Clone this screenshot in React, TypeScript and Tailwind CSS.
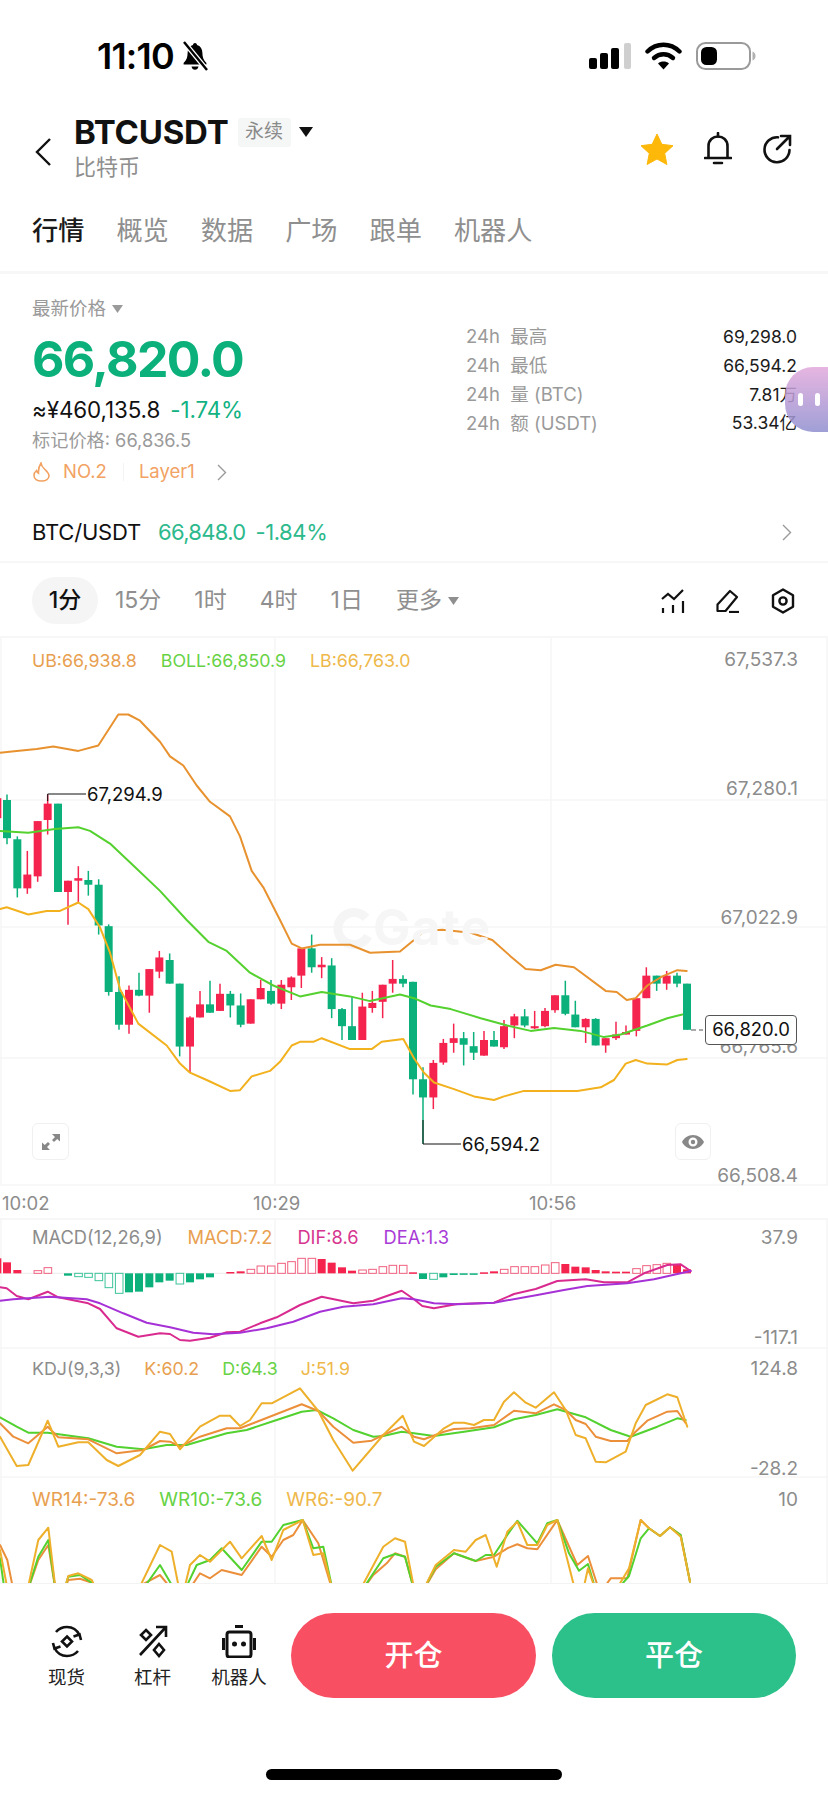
import React from "react";

type Candle = [number, number, number, number, number, "r" | "g"];
type Pt = [number, number];

const RED = "#f5244f";
const GREEN = "#0bb07b";

// x in 3x crop px, y in 2.75x crop px, relative to (0,640)
const candles: Candle[] = [
  [-8, 430, 500, 435, 490, "r"],
  [21, 425, 562, 440, 545, "g"],
  [52, 540, 708, 548, 683, "g"],
  [82, 580, 698, 645, 683, "r"],
  [113, 498, 665, 498, 650, "r"],
  [143, 425, 535, 450, 495, "r"],
  [174, 450, 693, 450, 693, "g"],
  [204, 662, 783, 662, 693, "r"],
  [235, 622, 722, 655, 662, "r"],
  [265, 635, 703, 660, 673, "g"],
  [296, 658, 810, 673, 785, "g"],
  [326, 782, 978, 787, 968, "g"],
  [357, 925, 1072, 968, 1058, "g"],
  [387, 950, 1083, 962, 1058, "r"],
  [417, 915, 980, 962, 978, "g"],
  [448, 905, 1025, 905, 978, "r"],
  [478, 855, 930, 873, 912, "r"],
  [509, 862, 945, 880, 945, "g"],
  [539, 945, 1145, 945, 1118, "g"],
  [570, 1035, 1190, 1038, 1118, "r"],
  [600, 965, 1038, 1002, 1038, "r"],
  [630, 937, 1025, 1002, 1025, "g"],
  [660, 945, 1020, 973, 1020, "r"],
  [691, 965, 1038, 973, 1005, "g"],
  [722, 972, 1065, 1005, 1058, "g"],
  [752, 988, 1055, 988, 1055, "r"],
  [782, 935, 988, 957, 988, "r"],
  [813, 935, 1003, 965, 1000, "g"],
  [844, 935, 1015, 948, 1000, "r"],
  [874, 925, 990, 928, 955, "r"],
  [904, 848, 957, 848, 923, "r"],
  [935, 810, 915, 848, 900, "g"],
  [965, 872, 930, 893, 900, "r"],
  [995, 875, 1040, 895, 1015, "g"],
  [1026, 1012, 1100, 1015, 1062, "g"],
  [1056, 980, 1100, 1062, 1100, "g"],
  [1087, 970, 1100, 1008, 1100, "r"],
  [1117, 965, 1025, 998, 1012, "r"],
  [1148, 948, 1040, 948, 995, "r"],
  [1178, 880, 970, 932, 945, "r"],
  [1209, 922, 955, 932, 945, "g"],
  [1239, 940, 1250, 940, 1208, "g"],
  [1269, 1175, 1385, 1208, 1258, "g"],
  [1300, 1155, 1290, 1163, 1258, "r"],
  [1330, 1097, 1168, 1108, 1162, "r"],
  [1361, 1055, 1135, 1095, 1108, "r"],
  [1391, 1078, 1170, 1095, 1113, "g"],
  [1421, 1078, 1155, 1117, 1135, "g"],
  [1452, 1075, 1143, 1100, 1143, "r"],
  [1482, 1075, 1118, 1100, 1118, "g"],
  [1512, 1045, 1125, 1062, 1120, "r"],
  [1543, 1028, 1095, 1035, 1060, "r"],
  [1574, 1015, 1065, 1035, 1060, "g"],
  [1604, 1020, 1070, 1062, 1068, "r"],
  [1635, 1012, 1065, 1020, 1062, "r"],
  [1665, 977, 1025, 977, 1018, "r"],
  [1696, 937, 1032, 977, 1028, "g"],
  [1726, 992, 1065, 1030, 1065, "g"],
  [1757, 1040, 1108, 1042, 1065, "r"],
  [1787, 1040, 1115, 1042, 1115, "g"],
  [1817, 1095, 1135, 1095, 1115, "r"],
  [1848, 1050, 1100, 1085, 1095, "r"],
  [1878, 1060, 1085, 1078, 1085, "r"],
  [1909, 985, 1090, 985, 1075, "r"],
  [1939, 900, 985, 923, 985, "r"],
  [1970, 923, 965, 923, 945, "g"],
  [2000, 910, 962, 923, 945, "r"],
  [2031, 915, 955, 923, 945, "g"],
  [2061, 945, 1072, 945, 1072, "g"],
];

const ub: Pt[] = [[0,310],[50,305],[110,300],[160,293],[235,305],[295,290],[355,205],[385,205],[420,222],[480,280],[510,320],[550,345],[590,400],[630,445],[690,485],[720,540],[755,635],[790,680],[840,770],[875,835],[905,848],[960,838],[1050,838],[1110,860],[1200,857],[1242,825],[1272,800],[1327,797],[1412,805],[1477,825],[1532,870],[1577,905],[1622,908],[1667,893],[1722,900],[1817,965],[1850,968],[1880,990],[1907,985],[1942,950],[1987,925],[2032,908],[2060,910]];
const boll: Pt[] = [[0,525],[85,530],[165,520],[235,515],[270,525],[330,560],[400,620],[480,690],[560,770],[625,830],[680,855],[750,915],[820,950],[900,980],[965,968],[1050,980],[1110,993],[1200,975],[1242,985],[1292,1005],[1352,1015],[1442,1040],[1522,1060],[1592,1075],[1662,1067],[1742,1075],[1812,1092],[1862,1085],[1942,1060],[2002,1040],[2047,1030]];
const lb: Pt[] = [[0,740],[20,735],[85,755],[140,745],[180,745],[235,722],[265,740],[300,790],[330,860],[360,960],[415,1055],[500,1115],[540,1165],[570,1190],[620,1210],[690,1240],[720,1238],[755,1200],[810,1185],[840,1160],[875,1115],[900,1105],[940,1105],[965,1095],[1050,1125],[1115,1125],[1145,1105],[1210,1097],[1242,1150],[1272,1190],[1302,1217],[1362,1235],[1422,1255],[1482,1265],[1512,1255],[1572,1240],[1732,1240],[1802,1230],[1842,1210],[1877,1165],[1907,1155],[1942,1165],[2002,1167],[2032,1155],[2060,1152]];

// macd panel points: x in 3x crop px, y in 3x crop px, relative to (0,1210)
const dif: Pt[] = [[0,232],[20,235],[50,258],[85,268],[143,245],[175,262],[265,280],[300,297],[350,355],[415,380],[480,370],[510,372],[540,390],[570,392],[630,383],[680,367],[720,365],[780,340],[830,322],[900,285],[965,260],[1060,280],[1120,272],[1205,242],[1242,268],[1267,288],[1302,295],[1372,282],[1482,278],[1542,252],[1607,237],[1672,213],[1757,208],[1812,217],[1882,217],[1932,190],[2002,165],[2042,163],[2072,183]];
const dea: Pt[] = [[0,272],[40,268],[150,260],[260,268],[300,280],[370,310],[440,338],[510,352],[580,368],[640,373],[720,368],[800,355],[880,335],[960,305],[1030,290],[1120,283],[1205,265],[1242,268],[1302,280],[1372,283],[1482,278],[1612,255],[1692,240],[1762,228],[1882,220],[1962,208],[2072,183]];

const kD: Pt[] = [[0,622],[50,650],[85,668],[143,668],[265,685],[350,710],[430,718],[500,705],[560,705],[680,670],[740,660],[830,630],[905,605],[950,600],[1000,625],[1060,660],[1120,680],[1150,678],[1205,665],[1242,670],[1302,678],[1392,665],[1482,652],[1542,628],[1607,615],[1672,598],[1757,622],[1832,660],[1892,680],[1972,650],[2032,625],[2057,630]];
const kK: Pt[] = [[0,640],[40,680],[85,700],[143,650],[175,682],[265,688],[350,730],[430,720],[480,693],[510,695],[540,710],[600,680],[680,655],[720,655],[790,628],[905,583],[955,603],[1000,650],[1060,698],[1115,692],[1150,675],[1205,650],[1242,680],[1272,688],[1332,665],[1362,657],[1412,655],[1482,645],[1542,602],[1607,610],[1662,583],[1697,600],[1727,630],[1757,642],[1787,680],[1832,693],[1882,693],[1902,670],[1942,632],[2002,605],[2032,603],[2057,640]];
const kJ: Pt[] = [[0,680],[50,768],[85,765],[143,632],[175,710],[235,697],[265,697],[320,750],[355,768],[420,735],[480,665],[510,672],[540,718],[600,650],[660,617],[690,617],[720,648],[750,630],[785,580],[815,580],[900,535],[955,603],[1000,690],[1058,782],[1150,675],[1208,617],[1242,695],[1272,708],[1332,655],[1362,638],[1392,638],[1422,645],[1452,630],[1482,630],[1512,575],[1542,547],[1577,578],[1607,593],[1662,547],[1697,600],[1727,675],[1757,685],[1787,755],[1817,757],[1877,725],[1907,640],[1937,585],[2002,553],[2032,562],[2062,650]];

const wO: Pt[] = [[0,1005],[22,1050],[42,1150],[80,1150],[115,1050],[145,1005],[168,1150],[190,1150],[205,1110],[240,1106],[275,1118],[300,1150],[400,1150],[430,1122],[480,1095],[525,1150],[560,1150],[600,1090],[630,1105],[665,1080],[725,1095],[785,1010],[815,1040],[850,990],[880,975],[908,930],[955,1000],[1000,1150],[1080,1150],[1120,1095],[1160,1060],[1185,1030],[1215,1040],[1245,1150],[1265,1150],[1307,1078],[1362,1030],[1427,1053],[1482,1040],[1522,1015],[1552,1003],[1582,1015],[1612,1018],[1672,930],[1732,1065],[1764,1038],[1800,1150],[1832,1105],[1882,1105],[1922,930],[1947,955],[1980,978],[2010,952],[2042,975],[2070,1115]];
const wG: Pt[] = [[0,1045],[15,1150],[80,1150],[115,1040],[145,990],[168,1150],[190,1150],[205,1100],[240,1095],[275,1118],[300,1150],[420,1150],[480,1065],[530,1150],[550,1150],[590,1065],[630,1050],[665,1015],[725,1080],[785,995],[815,995],[850,945],[908,930],[940,1015],[970,1010],[1000,1150],[1080,1150],[1120,1090],[1150,1045],[1185,1032],[1215,1040],[1245,1150],[1265,1150],[1307,1070],[1362,1030],[1427,1053],[1457,1035],[1482,1035],[1522,975],[1552,932],[1612,1000],[1642,940],[1672,930],[1707,1030],[1737,1082],[1764,1062],[1790,1150],[1842,1150],[1887,1098],[1922,985],[1947,955],[1980,978],[2010,952],[2042,975],[2070,1115]];
const wY: Pt[] = [[0,1020],[25,1150],[80,1150],[115,990],[145,953],[168,1150],[190,1150],[205,1098],[235,1090],[275,1110],[295,1150],[410,1150],[480,1005],[515,1025],[540,1150],[550,1150],[570,1065],[600,1035],[630,1055],[690,995],[725,1045],[785,978],[815,1050],[850,960],[908,930],[940,1035],[970,1030],[1000,1150],[1075,1150],[1150,1010],[1185,985],[1215,995],[1245,1150],[1265,1150],[1307,1065],[1362,1020],[1397,1025],[1427,990],[1457,975],[1490,1070],[1522,965],[1552,935],[1582,1005],[1612,1005],[1642,945],[1672,930],[1730,1160],[1745,1160],[1764,1075],[1790,1150],[1842,1150],[1887,1075],[1922,930],[1947,955],[1980,978],[2010,952],[2042,980],[2070,1115]];

// [x center, top, bottom, hollow]
const bars: [number, number, number, boolean][] = [
  [-8,145,190,false],[21,157,190,false],[52,180,190,false],[113,182,190,true],[143,173,190,true],
  [204,190,197,false],[235,190,200,true],[265,190,202,true],[296,190,212,true],[326,190,233,true],[357,190,250,true],
  [387,190,247,false],[417,190,245,false],[448,190,232,false],[478,190,217,false],[509,190,212,false],[539,190,222,true],
  [570,190,217,false],[600,190,208,false],[630,190,202,false],[691,186,190,false],[722,184,190,false],[752,178,190,true],
  [782,168,190,true],[813,168,190,true],[844,160,190,true],[874,155,190,true],[904,145,190,true],[935,145,190,true],
  [965,147,190,false],[995,158,190,false],[1026,172,190,false],[1056,182,190,false],[1087,180,190,true],[1117,178,190,true],
  [1148,170,190,true],[1178,166,190,true],[1209,166,190,true],[1239,187,190,false],
  [1269,190,207,false],[1300,190,208,true],[1330,190,202,false],[1361,190,195,false],[1391,190,192,false],[1421,190,191,false],
  [1452,187,190,false],[1482,184,190,false],[1512,178,190,true],[1543,170,190,true],[1574,170,190,true],[1604,170,190,true],
  [1635,165,190,true],[1665,158,190,true],[1696,162,190,false],[1726,170,190,false],[1757,172,190,false],[1787,180,190,false],
  [1817,184,190,false],[1848,185,190,false],[1878,185,190,false],[1909,176,190,true],[1939,167,190,true],[1970,164,190,true],
  [2000,160,190,true],[2031,162,190,false],[2061,178,190,false],
];

const mainPts = (pts: Pt[]) => pts.map(([x, y]) => `${(x / 3).toFixed(1)},${(640 + y / 2.75).toFixed(1)}`).join(" ");
const subPts = (pts: Pt[]) => pts.map(([x, y]) => `${(x / 3).toFixed(1)},${(1210 + y / 3).toFixed(1)}`).join(" ");

const Line = ({ points, color }: { points: string; color: string }) => (
  <polyline points={points} fill="none" stroke={color} strokeWidth={2} strokeLinejoin="round" strokeLinecap="round" />
);

const MainChart = () => (
  <svg className="absolute inset-0 w-[828px] h-[580px]" viewBox="0 638 828 580">
    <g stroke="#f6f6f6" strokeWidth={1.5}>
      <line x1="0" y1="800" x2="828" y2="800" />
      <line x1="0" y1="927" x2="828" y2="927" />
      <line x1="0" y1="1058" x2="828" y2="1058" />
      <line x1="0" y1="1185" x2="828" y2="1185" />
      <line x1="275" y1="638" x2="275" y2="1185" />
      <line x1="551" y1="638" x2="551" y2="1185" />
      <line x1="1" y1="638" x2="1" y2="1185" />
      <line x1="827" y1="638" x2="827" y2="1185" />
    </g>
    <path d="M366 918a16 16 0 1 0 2 18" fill="none" stroke="#f5f5f5" strokeWidth={9} />
    {candles.map(([x, wt, wb, bt, bb, c], i) => {
      const col = c === "r" ? RED : GREEN;
      const cx = x / 3;
      return (
        <g key={i}>
          <line x1={cx} x2={cx} y1={640 + wt / 2.75} y2={640 + wb / 2.75} stroke={col} strokeWidth={1.5} />
          <rect x={cx - 4} y={640 + bt / 2.75} width={8} height={Math.max((bb - bt) / 2.75, 1.5)} fill={col} />
        </g>
      );
    })}
    <Line points={mainPts(ub)} color="#e8922f" />
    <Line points={mainPts(boll)} color="#54d12f" />
    <Line points={mainPts(lb)} color="#f2b11d" />
    <polyline points="47.7,801 47.7,794 86,794" fill="none" stroke="#111" strokeWidth={1} />
    <polyline points="423,1120 423,1144 461,1144" fill="none" stroke="#111" strokeWidth={1} />
    <line x1="691" y1="1030" x2="703" y2="1030" stroke="#555" strokeWidth={1} strokeDasharray="5 3" />
  </svg>
);

const SubCharts = () => (
  <svg className="absolute inset-0 w-[828px] h-[365px]" viewBox="0 1218 828 365">
    <line x1="0" y1="1219" x2="828" y2="1219" stroke="#f5f5f5" strokeWidth={1.5} />
    <g stroke="#f6f6f6" strokeWidth={1.5}>
      <line x1="0" y1="1348" x2="828" y2="1348" />
      <line x1="0" y1="1477" x2="828" y2="1477" />
      <line x1="275" y1="1218" x2="275" y2="1583" />
      <line x1="551" y1="1218" x2="551" y2="1583" />
      <line x1="1" y1="1218" x2="1" y2="1583" />
      <line x1="827" y1="1218" x2="827" y2="1583" />
    </g>
    <line x1="0" y1="1273.3" x2="690" y2="1273.3" stroke="#ececec" strokeWidth={1} />
    {bars.map(([x, t, b, hollow], i) => {
      const col = b > 190 ? GREEN : RED;
      const h = Math.max((b - t) / 3, 1.5);
      return hollow ? (
        <rect key={i} x={x / 3 - 3.6} y={1210 + t / 3} width={7.6} height={h} fill="#fff" stroke={b > 190 ? "#3cc39a" : "#f0607f"} strokeWidth={1} />
      ) : (
        <rect key={i} x={x / 3 - 4} y={1210 + t / 3} width={8} height={h} fill={col} />
      );
    })}
    <Line points={subPts(dif)} color="#d92b8f" />
    <Line points={subPts(dea)} color="#a631d6" />
    <Line points={subPts(kD)} color="#52d12f" />
    <Line points={subPts(kK)} color="#ec8f3a" />
    <Line points={subPts(kJ)} color="#eeb02b" />
    <Line points={subPts(wO)} color="#ec8f3a" />
    <Line points={subPts(wG)} color="#52d12f" />
    <Line points={subPts(wY)} color="#eeb02b" />
  </svg>
);

const StatRow = ({ label, value }: { label: string; value: string }) => (
  <div className="flex items-center justify-between h-[28.7px]">
    <span className="text-[18.5px] text-[#9a9a9a] whitespace-pre">{label}</span>
    <span className="text-[17.5px] text-[#1c1c1c]">{value}</span>
  </div>
);

export default function App() {
  return (
    <div className="relative w-[828px] h-[1795px] overflow-hidden bg-white font-['Inter','Noto_Sans_CJK_SC',sans-serif]">
      {/* status bar */}
      <div className="h-[112px] pt-[38px] pl-[97px] pr-[72px] flex justify-between items-start">
        <div className="flex items-center gap-[7px]">
          <span className="text-[36px] leading-[36px] font-semibold tracking-[-0.8px] text-black">11:10</span>
          <svg width="28" height="30" viewBox="0 0 28 30">
            <path d="M14 2c-1.4 0-2 1-2 2-3.6 1-5.400 4-5.400 8 0 4-1 7-4 10v1.500h22.800V22c-3-3-4-6-4-10 0-4-1.800-7-5.400-8 0-1-.6-2-2-2z" fill="#000" />
            <path d="M10.500 25.500c.3 2 1.800 3.300 3.500 3.300s3.200-1.300 3.500-3.300z" fill="#000" />
            <line x1="3" y1="1" x2="26" y2="29" stroke="#fff" strokeWidth={5} />
            <line x1="3" y1="1" x2="26" y2="29" stroke="#000" strokeWidth={2.4} />
          </svg>
        </div>
        <div className="flex items-center gap-[14px] pt-[4px]">
          <svg width="42" height="26" viewBox="0 0 42 26">
            <rect x="0" y="15" width="8" height="11" rx="2" fill="#000" />
            <rect x="11" y="10" width="8" height="16" rx="2" fill="#000" />
            <rect x="22" y="5" width="8" height="21" rx="2" fill="#000" />
            <rect x="35" y="0" width="7" height="26" rx="2" fill="#cfcfcf" />
          </svg>
          <svg width="37" height="28" viewBox="0 0 37 28">
            <path d="M2.500 9.500C11.500 .5 25.500 .5 34.500 9.500" fill="none" stroke="#000" strokeWidth={4.4} strokeLinecap="round" />
            <path d="M9 16c5.500-5 13.500-5 19 0" fill="none" stroke="#000" strokeWidth={4.4} strokeLinecap="round" />
            <path d="M18.500 27.500l-5.500-6c3-2.600 8-2.600 11 0z" fill="#000" />
          </svg>
          <svg width="60" height="28" viewBox="0 0 60 28">
            <rect x="1" y="1" width="53" height="26" rx="8.500" fill="#fff" stroke="#9a9a9a" strokeWidth={2} />
            <rect x="5" y="5" width="16" height="18" rx="5.500" fill="#000" />
            <path d="M56.500 9.500c2 .6 3 2.500 3 4.500s-1 3.900-3 4.500z" fill="#b0b0b0" />
          </svg>
        </div>
      </div>

      {/* symbol header */}
      <div className="h-[80px] flex items-start pl-[34px] pr-[36px]">
        <svg className="mt-[25px] shrink-0" width="18" height="30" viewBox="0 0 18 30">
          <path d="M16 2L3 15l13 13" fill="none" stroke="#111" strokeWidth={2.400} />
        </svg>
        <div className="ml-[22px] flex flex-col">
          <div className="flex items-center h-[34px] mt-[3px]">
            <span className="text-[33px] leading-[34px] font-bold tracking-[-0.2px] text-[#111]">BTCUSDT</span>
            <span className="ml-[9px] w-[53px] h-[29px] rounded-[3px] bg-[#f5f6f6] text-[19px] text-[#8a8a8a] flex items-center justify-center">永续</span>
            <svg className="ml-[8px]" width="14" height="10" viewBox="0 0 14 10"><path d="M0 0h14L7 10z" fill="#111" /></svg>
          </div>
          <span className="text-[22px] leading-[30px] mt-[3px] text-[#8f8f8f]">比特币</span>
        </div>
        <div className="ml-auto mt-[20px] flex items-center gap-[30px]">
          <svg width="34" height="32" viewBox="0 0 34 32"><path d="M17 1l4.800 10.300 11.200 1.400-8.300 7.700 2.200 11.100L17 26l-9.900 5.500 2.200-11.100L1 12.700l11.200-1.400z" fill="#fdb809" stroke="#fdb809" strokeWidth={1} strokeLinejoin="round" /></svg>
          <svg width="28" height="33" viewBox="0 0 28 33" fill="none" stroke="#111" strokeWidth={2.600}>
            <path d="M1 26h26" strokeLinecap="round" />
            <path d="M4.500 26V14C4.500 8 9 4.500 14 4.500S23.500 8 23.500 14v12" />
            <path d="M14 1v3.500M10 31h8" strokeLinecap="round" />
          </svg>
          <svg width="30" height="30" viewBox="0 0 30 30" fill="none" stroke="#111" strokeWidth={2.600} strokeLinecap="round">
            <path d="M16 3.300A12.500 12.500 0 1 0 27.500 16" />
            <path d="M15 15L27 3M19 2h9v9" />
          </svg>
        </div>
      </div>

      {/* tabs */}
      <div className="h-[82px] pt-[24px] pl-[32px] flex items-start gap-[32px] text-[26.200px] leading-[30px] text-[#8f8f8f] border-b-[3px] border-[#f7f7f7]">
        <span className="font-medium text-[#1a1a1a]">行情</span>
        <span>概览</span>
        <span>数据</span>
        <span>广场</span>
        <span>跟单</span>
        <span>机器人</span>
      </div>

      {/* price block */}
      <div className="relative h-[289px] pt-[24px] pl-[32px] pr-[31px] flex border-b-[2px] border-[#f7f7f7]">
        <div className="w-[434px] flex flex-col">
          <div className="flex items-center gap-[6px] h-[22px] text-[18.500px] text-[#9a9a9a]">
            <span>最新价格</span>
            <svg width="11" height="8" viewBox="0 0 11 8"><path d="M0 0h11L5.500 8z" fill="#9a9a9a" /></svg>
          </div>
          <span className="mt-[9px] text-[50px] leading-[60px] font-bold tracking-[-1.6px] text-[#0bb07b]">66,820.0</span>
          <div className="mt-[7px] flex items-center gap-[10px] h-[28px] text-[22.400px] tracking-[-0.1px]">
            <span className="text-[#111]">≈¥460,135.8</span>
            <span className="text-[#12b283]">-1.74%</span>
          </div>
          <span className="mt-[2px] text-[18.200px] leading-[28px] text-[#9a9a9a]">标记价格: 66,836.5</span>
          <div className="mt-[3px] flex items-center h-[30px] text-[18.500px] text-[#f2a263]">
            <svg width="19" height="20" viewBox="0 0 19 20" fill="none" stroke="#f2a263" strokeWidth={1.600}>
              <path d="M9 1c.5 3.500 2 4.500 4 6.500 2 2 4 3.700 4 6.300 0 3-3 5.200-7.500 5.200S2 17 2 13.500c0-2 1-3.800 2.500-5 .3 1.300 1 2.200 2 2.700C6.200 7.500 7 4 9 1z" />
            </svg>
            <span className="ml-[12px]">NO.2</span>
            <span className="ml-[16px] w-px h-[18px] bg-[#f3f3f3]" />
            <span className="ml-[15px]">Layer1</span>
            <svg className="ml-[22px]" width="10" height="17" viewBox="0 0 10 17"><path d="M1 1l7.500 7.500L1 16" fill="none" stroke="#9a9a9a" strokeWidth={1.400} /></svg>
          </div>
        </div>
        <div className="flex-1 flex flex-col pt-[25px]">
          <StatRow label="24h  最高" value="69,298.0" />
          <StatRow label="24h  最低" value="66,594.2" />
          <StatRow label="24h  量 (BTC)" value="7.81万" />
          <StatRow label="24h  额 (USDT)" value="53.34亿" />
        </div>
        <div className="absolute left-0 right-0 bottom-0 h-[58px] pl-[32px] pr-[36px] flex items-center text-[22px]">
          <span className="text-[#111] tracking-[-0.2px]">BTC/USDT</span>
          <span className="ml-[17px] text-[#2cb98c] tracking-[-0.7px]">66,848.0</span>
          <span className="ml-[10px] text-[#2cb98c] tracking-[-0.4px]">-1.84%</span>
          <svg className="ml-auto" width="10" height="17" viewBox="0 0 10 17"><path d="M1 1l7.500 7.500L1 16" fill="none" stroke="#9a9a9a" strokeWidth={1.400} /></svg>
        </div>
      </div>

      {/* assistant blob */}
      <div className="absolute left-[785px] top-[367px] w-[60px] h-[65px] rounded-l-[28px] bg-gradient-to-b from-[#e3a9dc] to-[#8f8fd0] opacity-85 flex items-center pl-[13px] gap-[12px]">
        <span className="w-[5px] h-[13px] rounded-full bg-white" />
        <span className="w-[5px] h-[13px] rounded-full bg-white" />
      </div>

      {/* interval bar */}
      <div className="h-[75px] pt-[14px] pl-[32px] pr-[33px] flex items-start border-b-[2px] border-[#f7f7f7]">
        <span className="w-[66px] h-[47px] rounded-[24px] bg-[#f5f5f5] text-[23px] font-medium text-[#111] flex items-center justify-center">1分</span>
        <div className="ml-[17px] h-[47px] flex items-center gap-[33px] text-[23px] text-[#8f8f8f]">
          <span>15分</span>
          <span>1时</span>
          <span>4时</span>
          <span>1日</span>
          <span className="flex items-center gap-[6px]">更多<svg width="11" height="8" viewBox="0 0 11 8"><path d="M0 0h11L5.500 8z" fill="#8f8f8f" /></svg></span>
        </div>
        <div className="ml-auto h-[47px] flex items-center gap-[31px]">
          <svg width="24" height="24" viewBox="0 0 24 24" fill="none" stroke="#111" strokeWidth={2.200}>
            <path d="M1 10l6-5 6 5 9-9" />
            <path d="M2 19v5M12 16v8M22 12v12" />
          </svg>
          <svg width="24" height="24" viewBox="0 0 24 24" fill="none" stroke="#111" strokeWidth={2.200} strokeLinejoin="round">
            <path d="M1.500 22v-6.500L14 2l7 6-11.500 14z" />
            <path d="M13 23h10" />
          </svg>
          <svg width="24" height="26" viewBox="0 0 24 26" fill="none" stroke="#111" strokeWidth={2.400} strokeLinejoin="round">
            <path d="M12 1.500l10 5.700v11.600l-10 5.700-10-5.700V7.200z" />
            <circle cx="12" cy="13" r="3.600" />
          </svg>
        </div>
      </div>

      {/* main chart */}
      <div className="relative h-[580px] text-[19px]">
        <MainChart />
        <span className="absolute left-[373px] top-[260px] text-[50px] leading-[58px] font-bold tracking-[1px] text-[#f6f6f6]">Gate</span>
        <div className="relative pt-[12px] pl-[32px] flex gap-[24px] text-[17.800px] leading-[22px]">
          <span className="text-[#e8a050]">UB:66,938.8</span>
          <span className="text-[#67d245]">BOLL:66,850.9</span>
          <span className="text-[#eeb84a]">LB:66,763.0</span>
        </div>
        <div className="absolute right-[30px] top-[11px] flex flex-col items-end gap-[107px] leading-[22px] text-[#8c8c8c]">
          <span>67,537.3</span>
          <span>67,280.1</span>
          <span>67,022.9</span>
          <span>66,765.6</span>
          <span>66,508.4</span>
        </div>
        <span className="absolute left-[87px] top-[145px] leading-[22px] text-[18.500px] text-[#111]">67,294.9</span>
        <span className="absolute left-[462px] top-[495px] leading-[22px] text-[18.500px] text-[#111]">66,594.2</span>
        <span className="absolute left-[705px] top-[377px] w-[92px] h-[30px] rounded-[4px] border border-[#555] bg-white text-[18.500px] text-[#111] flex items-center justify-center">66,820.0</span>
        <span className="absolute left-[32px] top-[485px] w-[37px] h-[37px] rounded-[6px] border border-[#f0f0f0] bg-white flex items-center justify-center">
          <svg width="20" height="18" viewBox="0 0 20 18">
            <path d="M11 1h8v7.500l-2.800-2.500L13 9l-2-2 3-3z" fill="#888" />
            <path d="M9 17H1V9.500L3.800 12 7 9l2 2-3 3z" fill="#888" />
          </svg>
        </span>
        <span className="absolute left-[675px] top-[485px] w-[36px] h-[37px] rounded-[6px] border border-[#f0f0f0] bg-white flex items-center justify-center">
          <svg width="22" height="14" viewBox="0 0 22 14">
            <path d="M11 0C6 0 2 3 0 7c2 4 6 7 11 7s9-3 11-7c-2-4-6-7-11-7zm0 11.500A4.500 4.500 0 1 1 11 2.500a4.500 4.500 0 0 1 0 9z" fill="#888" />
            <circle cx="11" cy="7" r="2.200" fill="#888" />
          </svg>
        </span>
        <div className="absolute left-[2px] right-0 top-[554px] leading-[22px] text-[18.500px] text-[#8c8c8c]">
          <span className="absolute left-0">10:02</span>
          <span className="absolute left-[251px]">10:29</span>
          <span className="absolute left-[527px]">10:56</span>
        </div>
      </div>

      {/* indicator panels */}
      <div className="relative h-[365px] overflow-hidden text-[19px] leading-[22px]">
        <SubCharts />
        <div className="absolute left-[32px] top-[8px] flex gap-[25px] text-[18.300px]">
          <span className="text-[#8c8c8c]">MACD(12,26,9)</span>
          <span className="text-[#e8a050]">MACD:7.2</span>
          <span className="text-[#d6358f]">DIF:8.6</span>
          <span className="text-[#a93bd6]">DEA:1.3</span>
        </div>
        <div className="absolute left-[32px] top-[140px] flex gap-[23px] text-[17.800px]">
          <span className="text-[#8c8c8c]">KDJ(9,3,3)</span>
          <span className="text-[#e8a050]">K:60.2</span>
          <span className="text-[#67d245]">D:64.3</span>
          <span className="text-[#eeb84a]">J:51.9</span>
        </div>
        <div className="absolute left-[32px] top-[271px] flex gap-[24px]">
          <span className="text-[#e8a050]">WR14:-73.6</span>
          <span className="text-[#67d245]">WR10:-73.6</span>
          <span className="text-[#eeb84a]">WR6:-90.7</span>
        </div>
        <span className="absolute right-[30px] top-[9px] text-[#8c8c8c]">37.9</span>
        <span className="absolute right-[30px] top-[109px] text-[#8c8c8c]">-117.1</span>
        <span className="absolute right-[30px] top-[140px] text-[#8c8c8c]">124.8</span>
        <span className="absolute right-[30px] top-[240px] text-[#8c8c8c]">-28.2</span>
        <span className="absolute right-[30px] top-[271px] text-[#8c8c8c]">10</span>
      </div>

      {/* bottom actions */}
      <div className="h-[212px] border-t border-[#f3f3f3] pt-[29px] pl-[31px] pr-[32px] flex items-start">
        <div className="flex w-[260px] pt-[12px] text-[18.500px] leading-[22px] text-[#222]">
          <div className="w-[71px] flex flex-col items-center gap-[8px]">
            <svg width="34" height="33" viewBox="0 0 34 33" fill="none" stroke="#111" strokeWidth={2.600}>
              <path d="M6 7C9 3.500 13 2 17 2c5.500 0 10 3 12.500 8" />
              <path d="M28 26c-3 3.500-7 5-11 5C11.500 31 7 28 4.500 23" />
              <path d="M31 15l-1.500-5.500-6 2" />
              <path d="M3 18l1.500 5.500 6-2" />
              <path d="M17 11.500l5 5-5 5-5-5z" />
            </svg>
            <span>现货</span>
          </div>
          <div className="ml-[15px] w-[71px] flex flex-col items-center gap-[8px]">
            <svg width="30" height="33" viewBox="0 0 30 33" fill="none" stroke="#111" strokeWidth={2.600}>
              <path d="M2 30L28 2M18 2h10v10" />
              <path d="M8 5l5 5-5 5-5-5z" />
              <path d="M21 19l5 6-5 6-5-6z" />
            </svg>
            <span>杠杆</span>
          </div>
          <div className="ml-[20px] w-[62px] flex flex-col items-center gap-[8px]">
            <svg width="34" height="33" viewBox="0 0 34 33">
              <rect x="5" y="7" width="24" height="25" rx="2.500" fill="none" stroke="#111" strokeWidth={3} />
              <rect x="13" y="0" width="8" height="3" fill="#111" />
              <rect x="0" y="13" width="3" height="12" fill="#111" />
              <rect x="31" y="13" width="3" height="12" fill="#111" />
              <circle cx="12.500" cy="19" r="2.500" fill="#111" />
              <circle cx="21.500" cy="19" r="2.500" fill="#111" />
            </svg>
            <span>机器人</span>
          </div>
        </div>
        <button className="w-[245px] h-[85px] rounded-full bg-[#f94f63] text-[29px] font-medium text-white">开仓</button>
        <button className="ml-[16px] w-[244px] h-[85px] rounded-full bg-[#2cc08a] text-[29px] font-medium text-white">平仓</button>
      </div>

      {/* home indicator */}
      <div className="absolute left-[266px] top-[1769px] w-[296px] h-[11px] rounded-full bg-black" />
    </div>
  );
}
